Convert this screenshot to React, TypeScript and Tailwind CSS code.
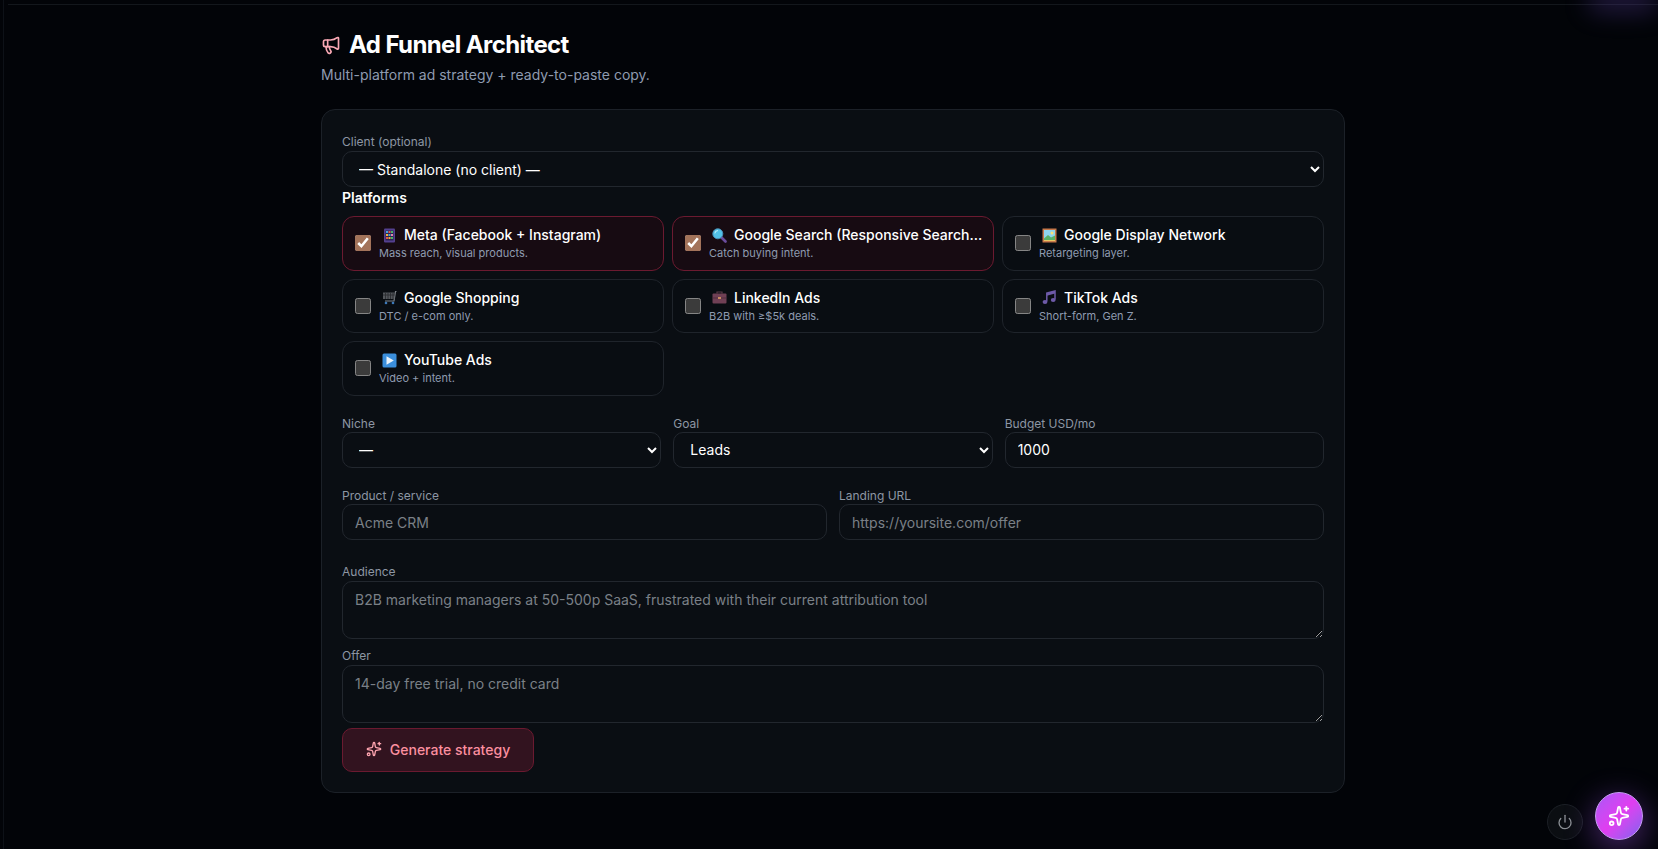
import type { ReactNode } from 'react'
import { Megaphone, Power, Sparkles } from 'lucide-react'

const PhoneEmoji = (
  <svg viewBox="0 0 15 15" className="ml-[3px] w-[15px] h-[15px] shrink-0">
    <rect x="2" y="0.5" width="11" height="14" rx="1" fill="#54408f" />
    <rect x="3.5" y="2.5" width="8" height="10" fill="#2a2350" />
    <rect x="4" y="3" width="2" height="2" fill="#3ea6e0" />
    <rect x="6.5" y="3" width="2" height="2" fill="#e0564f" />
    <rect x="9" y="3" width="2" height="2" fill="#47b36b" />
    <rect x="4" y="6" width="2" height="2" fill="#f2b233" />
    <rect x="6.5" y="6" width="2" height="2" fill="#3ea6e0" />
    <rect x="9" y="6" width="2" height="2" fill="#e887a8" />
    <rect x="4" y="9" width="2" height="2" fill="#e0564f" />
    <rect x="6.5" y="9" width="2" height="2" fill="#f2b233" />
    <rect x="9" y="9" width="2" height="2" fill="#47b36b" />
  </svg>
)

const SearchEmoji = (
  <svg viewBox="0 0 15 15" className="ml-[3px] w-[15px] h-[15px] shrink-0">
    <path d="M9.5 9.5 13.5 13.5" stroke="#6a4c9c" strokeWidth="2.6" strokeLinecap="round" />
    <circle cx="5.8" cy="5.8" r="5" fill="#52c2e8" stroke="#4a90b8" strokeWidth="1" />
    <path d="M3 5a3 3 0 0 1 2.5-2.4" stroke="#b5ecf8" strokeWidth="1.2" fill="none" strokeLinecap="round" />
  </svg>
)

const PictureEmoji = (
  <svg viewBox="0 0 15 15" className="ml-[3px] w-[15px] h-[15px] shrink-0">
    <rect x="0.5" y="0.5" width="14" height="14" fill="#c8794a" />
    <rect x="2" y="2" width="11" height="11" fill="#8fd6ee" />
    <circle cx="10" cy="5" r="1.5" fill="#f8e27a" />
    <path d="M2 10.5 6 7l3 2.5 4-2V13H2z" fill="#58b368" />
    <path d="M2 12h11v1H2z" fill="#e6c765" />
  </svg>
)

const CartEmoji = (
  <svg viewBox="0 0 15 15" className="ml-[3px] w-[15px] h-[15px] shrink-0">
    <path d="M13 1.5h1.5M13.5 1.5 12 11H3" stroke="#7d8288" strokeWidth="1.2" fill="none" />
    <rect x="1" y="2.5" width="11.5" height="6.5" fill="#53575c" />
    <path d="M3.5 2.5V9M6 2.5V9M8.5 2.5V9M11 2.5V9M1 5h11.5" stroke="#2b2e32" strokeWidth="0.9" />
    <circle cx="4" cy="13" r="1.3" fill="#3b78b8" />
    <circle cx="11" cy="13" r="1.3" fill="#3b78b8" />
  </svg>
)

const BriefcaseEmoji = (
  <svg viewBox="0 0 15 15" className="ml-[3px] w-[15px] h-[15px] shrink-0">
    <path d="M5 3.5V2h5v1.5" stroke="#5a3a48" strokeWidth="1.2" fill="none" />
    <rect x="0.5" y="3.5" width="14" height="10" rx="1" fill="#704055" />
    <path d="M0.5 8h14" stroke="#4d2b3b" strokeWidth="0.8" />
    <rect x="6" y="7" width="3" height="2" fill="#c98b5f" />
  </svg>
)

const MusicEmoji = (
  <svg viewBox="0 0 15 15" className="ml-[3px] w-[15px] h-[15px] shrink-0">
    <path d="M4.8 11.5V3.2L13 1v8.5" stroke="#6e5aa8" strokeWidth="1.5" fill="none" />
    <path d="M4.8 3.2 13 1v2.5L4.8 5.7z" fill="#6e5aa8" />
    <ellipse cx="3" cy="12" rx="2.4" ry="2" fill="#6e5aa8" />
    <ellipse cx="11.2" cy="10" rx="2.4" ry="2" fill="#6e5aa8" />
  </svg>
)

const PlayEmoji = (
  <svg viewBox="0 0 15 15" className="ml-[3px] w-[15px] h-[15px] shrink-0">
    <rect x="0.5" y="0.5" width="14" height="14" rx="1.5" fill="#3b8fdc" />
    <path d="M4.5 3.2 11.8 7.5 4.5 11.8z" fill="#eaf3fb" />
  </svg>
)

interface Platform {
  icon: ReactNode
  name: string
  desc: string
  checked: boolean
}

const platforms: Platform[] = [
  { icon: PhoneEmoji, name: 'Meta (Facebook + Instagram)', desc: 'Mass reach, visual products.', checked: true },
  { icon: SearchEmoji, name: 'Google Search (Responsive Search Ads)', desc: 'Catch buying intent.', checked: true },
  { icon: PictureEmoji, name: 'Google Display Network', desc: 'Retargeting layer.', checked: false },
  { icon: CartEmoji, name: 'Google Shopping', desc: 'DTC / e-com only.', checked: false },
  { icon: BriefcaseEmoji, name: 'LinkedIn Ads', desc: 'B2B with ≥$5k deals.', checked: false },
  { icon: MusicEmoji, name: 'TikTok Ads', desc: 'Short-form, Gen Z.', checked: false },
  { icon: PlayEmoji, name: 'YouTube Ads', desc: 'Video + intent.', checked: false },
]

const fieldClass =
  'w-full h-[36px] rounded-[10px] border border-[#22272e] bg-[#0a0e13] px-3 text-[14px] text-white placeholder:text-[#7a8087] outline-none'
const labelClass = 'block text-[12px] leading-[16px] text-[#8d96a3]'

function PlatformTile({ icon, name, desc, checked }: Platform) {
  return (
    <label
      className={`flex items-center gap-2 rounded-[12px] border pl-3 pr-2 pb-[1px] ${
        checked ? 'border-[#6b1a30] bg-[#170b12]' : 'border-[#1f242b] bg-[#090d12]'
      }`}
    >
      <input type="checkbox" defaultChecked={checked} className="w-4 h-4 shrink-0 accent-[#a3735a] [color-scheme:dark]" />
      <div className="min-w-0 flex-1">
        <div className="flex items-center gap-[7px] text-[14px] leading-[20px] font-medium text-white">
          {icon}
          <span className="truncate">{name}</span>
        </div>
        <div className="text-[11px] leading-[16px] text-[#8f9bb0]">{desc}</div>
      </div>
    </label>
  )
}

export default function App() {
  return (
    <div className="relative flex min-h-screen overflow-hidden bg-[#020408] font-['Inter',sans-serif] [color-scheme:dark]">
      <div className="w-1 mr-1 border-r border-[#0d1117]" />
      <div className="flex-1 min-w-0">
        <div className="h-[5px] border-b border-[#13171c]" />
        <main className="mx-auto w-[1024px] pt-[24px] pb-[56px]">
          <h1 className="flex items-center gap-2 text-[24px] leading-[32px] font-bold tracking-tight text-white">
            <Megaphone className="w-5 h-5 text-[#f9a8b4]" />
            Ad Funnel Architect
          </h1>
          <p className="mt-1 text-[14px] leading-[20px] text-[#8f9bb0]">
            Multi-platform ad strategy + ready-to-paste copy.
          </p>

          <div className="mt-6 rounded-[14px] border border-[#1c2128] bg-[#0a0e13] px-5 pt-6 pb-5">
            <label className={`${labelClass} mb-[1px]`}>Client (optional)</label>
            <select className={fieldClass}>
              <option>— Standalone (no client) —</option>
            </select>

            <div className="mt-[1px] mb-2 text-[14px] leading-[20px] font-semibold text-white">Platforms</div>
            <div className="grid grid-cols-3 grid-rows-[55px_54px_55px] gap-2">
              {platforms.map(p => (
                <PlatformTile key={p.name} {...p} />
              ))}
            </div>

            <div className="mt-5 grid grid-cols-3 gap-3">
              <div>
                <label className={labelClass}>Niche</label>
                <select className={`${fieldClass} pb-[2px]`}>
                  <option>—</option>
                </select>
              </div>
              <div>
                <label className={labelClass}>Goal</label>
                <select className={`${fieldClass} pb-[2px]`}>
                  <option>Leads</option>
                </select>
              </div>
              <div>
                <label className={labelClass}>Budget USD/mo</label>
                <input className={`${fieldClass} pb-[2px]`} defaultValue="1000" />
              </div>
            </div>

            <div className="mt-5 grid grid-cols-2 gap-3">
              <div>
                <label className={labelClass}>Product / service</label>
                <input className={fieldClass} placeholder="Acme CRM" />
              </div>
              <div>
                <label className={labelClass}>Landing URL</label>
                <input className={fieldClass} placeholder="https://yoursite.com/offer" />
              </div>
            </div>

            <div className="mt-6">
              <label className={`${labelClass} mb-[1px]`}>Audience</label>
              <textarea
                className={`${fieldClass} h-[58px] pt-[7px] block`}
                placeholder="B2B marketing managers at 50-500p SaaS, frustrated with their current attribution tool"
              />
            </div>
            <div className="mt-[9px]">
              <label className={`${labelClass} mb-[1px]`}>Offer</label>
              <textarea className={`${fieldClass} h-[58px] pt-[7px] block`} placeholder="14-day free trial, no credit card" />
            </div>

            <button className="mt-[5px] flex h-[44px] w-[192px] items-center justify-center gap-2 rounded-[10px] border border-[#6b1a30] bg-[#32131f] pb-[2px] text-[14px] font-medium text-[#fb8f9f]">
              <Sparkles className="w-4 h-4 text-[#fda4af]" />
              Generate strategy
            </button>
          </div>
        </main>
      </div>

      <div className="pointer-events-none absolute right-0 top-[-12px] h-[24px] w-[70px] rounded-full bg-[#6d4ac0]/30 blur-md" />

      <button className="fixed right-[75px] bottom-[9px] flex h-9 w-9 items-center justify-center rounded-full border border-[#1c2026] bg-[#0b0e12] text-[#8b8f94]">
        <Power className="w-4 h-4" />
      </button>
      <button className="fixed right-[15px] bottom-[9px] flex h-12 w-12 items-center justify-center rounded-full border border-[#c79cf5] bg-gradient-to-br from-[#a855f7] via-[#e03df0] to-[#7c5cf0] text-white shadow-[0_8px_32px_rgba(168,85,247,0.45)]">
        <Sparkles className="w-[22px] h-[22px]" />
      </button>
    </div>
  )
}
